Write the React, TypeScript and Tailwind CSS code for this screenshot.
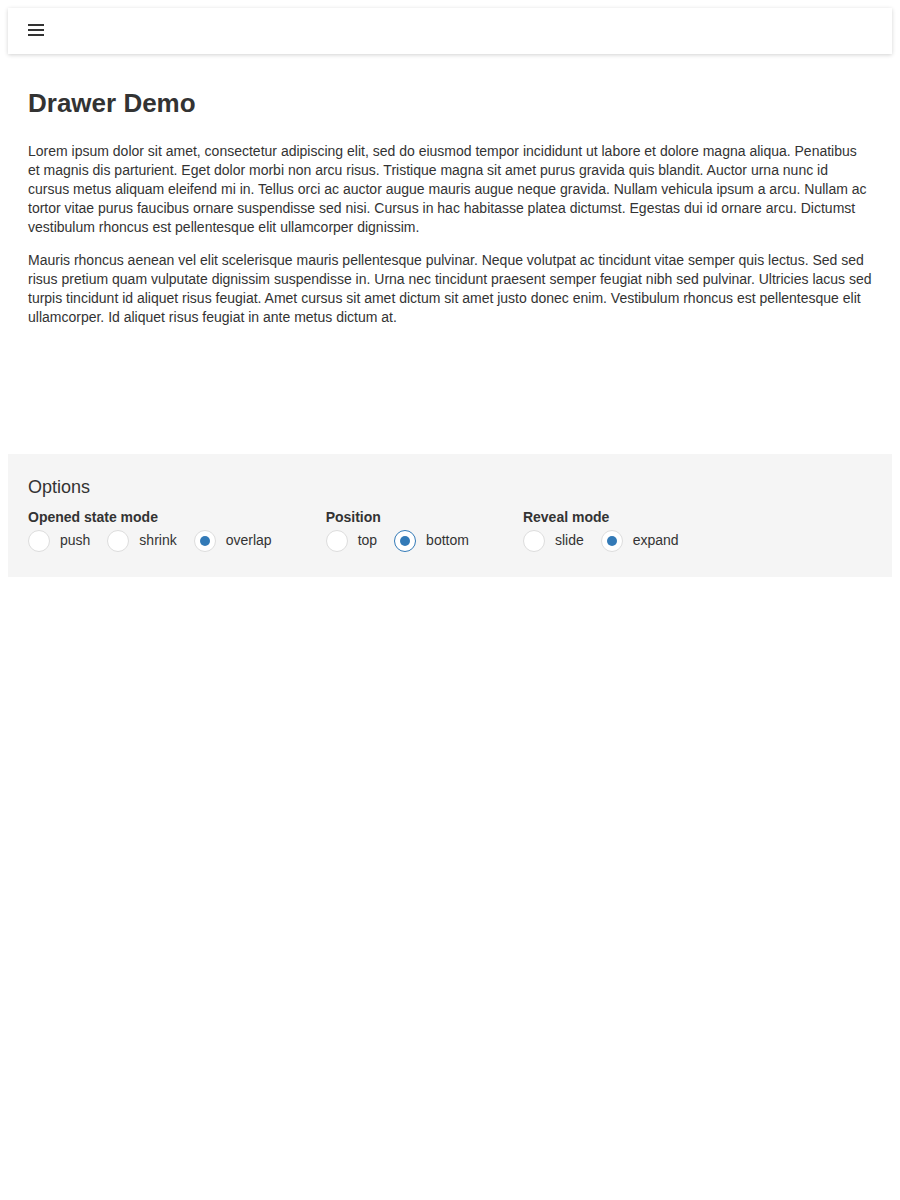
import { useState } from "react";

const paragraphs = [
  "Lorem ipsum dolor sit amet, consectetur adipiscing elit, sed do eiusmod tempor incididunt ut labore et dolore magna aliqua. Penatibus et magnis dis parturient. Eget dolor morbi non arcu risus. Tristique magna sit amet purus gravida quis blandit. Auctor urna nunc id cursus metus aliquam eleifend mi in. Tellus orci ac auctor augue mauris augue neque gravida. Nullam vehicula ipsum a arcu. Nullam ac tortor vitae purus faucibus ornare suspendisse sed nisi. Cursus in hac habitasse platea dictumst. Egestas dui id ornare arcu. Dictumst vestibulum rhoncus est pellentesque elit ullamcorper dignissim.",
  "Mauris rhoncus aenean vel elit scelerisque mauris pellentesque pulvinar. Neque volutpat ac tincidunt vitae semper quis lectus. Sed sed risus pretium quam vulputate dignissim suspendisse in. Urna nec tincidunt praesent semper feugiat nibh sed pulvinar. Ultricies lacus sed turpis tincidunt id aliquet risus feugiat. Amet cursus sit amet dictum sit amet justo donec enim. Vestibulum rhoncus est pellentesque elit ullamcorper. Id aliquet risus feugiat in ante metus dictum at.",
];

const MenuIcon = () => (
  <svg width="16" height="14" viewBox="0 0 16 14" fill="#333" className="mb-[2px]">
    <rect x="0" y="1" width="16" height="2" />
    <rect x="0" y="6" width="16" height="2" />
    <rect x="0" y="11" width="16" height="2" />
  </svg>
);

const RadioGroup = ({
  label,
  items,
  value,
  focused,
  onChange,
}: {
  label: string;
  items: string[];
  value: string;
  focused?: boolean;
  onChange: (v: string) => void;
}) => (
  <div className="flex flex-col">
    <div className="text-[14px] leading-[19px] font-bold text-[#333]">{label}</div>

    <div className="flex items-center mt-[2.5px] gap-[17px]">
      {items.map((item) => {
        const checked = item === value;
        return (
          <div
            key={item}
            className="flex items-center gap-[10px] cursor-pointer"
            onClick={() => onChange(item)}
          >
            <span
              className={`w-[22px] h-[22px] rounded-full bg-white border flex items-center justify-center ${
                checked && focused ? "border-[#337ab7]" : "border-[#ddd]"
              }`}
            >
              {checked && (
                <span className="w-[10px] h-[10px] rounded-full bg-[#337ab7]" />
              )}
            </span>

            <span className="text-[14px] leading-[19px] text-[#333]">{item}</span>
          </div>
        );
      })}
    </div>
  </div>
);

export default function App() {
  const [openedMode, setOpenedMode] = useState("overlap");
  const [position, setPosition] = useState("bottom");
  const [reveal, setReveal] = useState("expand");

  return (
    <div className="p-2 bg-white text-[#333] font-['Liberation_Sans',Arial,sans-serif]">
      <div className="h-[46px] bg-white flex items-center pl-5 shadow-[0_1px_4px_rgba(0,0,0,0.18)] relative">
        <MenuIcon />
      </div>

      <div className="h-[400px] px-5 pt-[34px]">
        <h2 className="text-[26px] leading-[30px] font-bold">Drawer Demo</h2>

        <div className="mt-[24px] flex flex-col gap-[14px]">
          {paragraphs.map((text, i) => (
            <p key={i} className="text-[14px] leading-[19px]">
              {text}
            </p>
          ))}
        </div>
      </div>

      <div className="bg-[#f5f5f5] px-5 pt-[23px] pb-[25px]">
        <div className="text-[18px] leading-[21px]">Options</div>

        <div className="flex mt-[10px] gap-[54px]">
          <RadioGroup
            label="Opened state mode"
            items={["push", "shrink", "overlap"]}
            value={openedMode}
            onChange={setOpenedMode}
          />

          <RadioGroup
            label="Position"
            items={["top", "bottom"]}
            value={position}
            focused
            onChange={setPosition}
          />

          <RadioGroup
            label="Reveal mode"
            items={["slide", "expand"]}
            value={reveal}
            onChange={setReveal}
          />
        </div>
      </div>
    </div>
  );
}
